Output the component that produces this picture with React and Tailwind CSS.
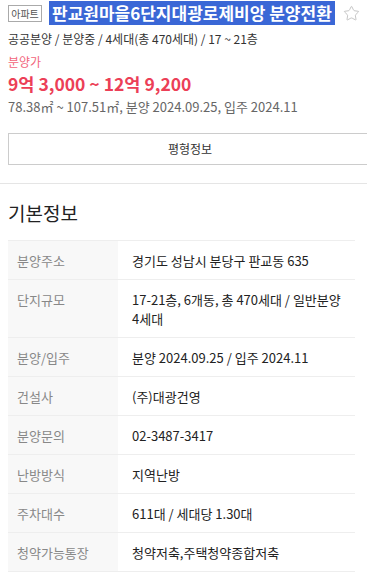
import { Star } from 'lucide-react'

const ROWS = [
  { label: '분양주소', value: '경기도 성남시 분당구 판교동 635' },
  { label: '단지규모', value: '17-21층, 6개동, 총 470세대 / 일반분양 4세대' },
  { label: '분양/입주', value: '분양 2024.09.25 / 입주 2024.11' },
  { label: '건설사', value: '(주)대광건영' },
  { label: '분양문의', value: '02-3487-3417' },
  { label: '난방방식', value: '지역난방' },
  { label: '주차대수', value: '611대 / 세대당 1.30대' },
  { label: '청약가능통장', value: '청약저축,주택청약종합저축' },
]

export default function App() {
  return (
    <div className="w-[367px] min-h-[583px] overflow-hidden bg-white text-[#222] font-['Noto_Sans_CJK_KR',sans-serif]">
      <div className="px-2 pt-[1px]">
        <div className="flex items-center h-6 whitespace-nowrap">
          <span className="w-[34px] shrink-0 text-center border border-[#aaa] text-[10px] leading-[13px] py-[1px] text-[#555]">아파트</span>
          <span className="ml-[7px] shrink-0 bg-[#3a67d6] text-white font-bold text-[17px] leading-6 px-[3px]">판교원마을6단지대광로제비앙 분양전환</span>
          <Star className="ml-[8px] shrink-0 size-[17px] text-[#b5b5b5]" strokeWidth={1.1} />
        </div>
        <div className="mt-[4px] text-[12px] leading-5 text-[#333]">공공분양 / 분양중 / 4세대(총 470세대) / 17 ~ 21층</div>
        <div className="mt-[3px] text-[12px] leading-5 text-[#f2647b]">분양가</div>
        <div className="text-[17.5px] leading-6 font-bold text-[#ec3f57]">9억 3,000 ~ 12억 9,200</div>
        <div className="mt-[1px] text-[13px] leading-5 text-[#666]">78.38㎡ ~ 107.51㎡, 분양 2024.09.25, 입주 2024.11</div>
        <button className="mt-[16px] w-[364px] h-[32px] border border-[#ccc] text-[12px] text-[#333]">평형정보</button>
      </div>
      <div className="mt-[18px] border-t border-[#e5e5e5]" />
      <div className="px-2">
        <h2 className="mt-[15px] text-[19px] leading-7 text-[#222]">기본정보</h2>
        <div className="mt-[13px] w-[347px] border-t border-[#eee]">
          {ROWS.map((r) => (
            <div key={r.label} className="flex border-b border-[#eee] text-[13px] leading-[19px]">
              <div className="w-[110px] shrink-0 bg-[#f8f8f8] pl-[9px] pt-[10px] pb-[9px] text-[#888]">{r.label}</div>
              <div className="pl-[14px] pr-2 pt-[10px] pb-[9px] text-[#222]">{r.value}</div>
            </div>
          ))}
        </div>
      </div>
    </div>
  )
}
